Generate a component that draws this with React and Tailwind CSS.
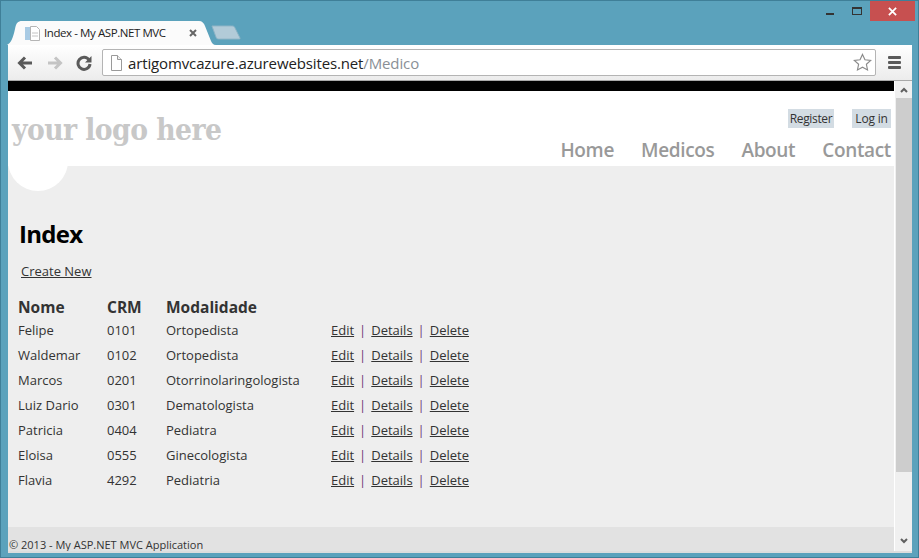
import React from "react";

const seg = { fontFamily: '"Open Sans", "Noto Sans", sans-serif' };
const rows = [
  ["Felipe", "0101", "Ortopedista"],
  ["Waldemar", "0102", "Ortopedista"],
  ["Marcos", "0201", "Otorrinolaringologista"],
  ["Luiz Dario", "0301", "Dematologista"],
  ["Patricia", "0404", "Pediatra"],
  ["Eloisa", "0555", "Ginecologista"],
  ["Flavia", "4292", "Pediatria"],
];

function DocIcon({ className }) {
  return (
    <svg viewBox="0 0 12 16" className={className}>
      <path d="M1.500 .5h6l4 4v11h-10z" fill="#fff" stroke="#9a9a9a" />
      <path d="M7.500 .5v4h4" fill="#eee" stroke="#9a9a9a" />
    </svg>
  );
}

export default function App() {
  return (
    <div className="relative w-[919px] h-[558px] overflow-hidden bg-[#5ba2bc] border border-[#3f7f98] flex flex-col" style={seg}>
      {/* title bar */}
      <div className="h-[44px] shrink-0 flex items-start justify-between pl-[6px]">
        <div className="flex items-end h-full pt-[20px]">
          <div className="relative w-[206px] h-[24px]">
            <svg viewBox="0 0 210 24" className="absolute left-0 top-0 w-[210px] h-[24px]">
              <path d="M0 24C4 22 6 17 8 8C9 2 11 0 15 0H192C195 0 197 2 198 5L204 20C205 22 206 24 209 24Z" fill="#fbfbfb" />
            </svg>
            <div className="relative flex items-center h-full pl-[18px]">
              <svg viewBox="0 0 15 15" className="w-[15px] h-[15px] shrink-0">
                <rect x="0" y="1" width="5" height="13" fill="#a9cbe4" />
                <path d="M5.500 .5h6l3 3v11h-9z" fill="#fff" stroke="#b5b5b5" />
                <path d="M7 7h6M7 10h6" stroke="#c4c4c4" />
              </svg>
              <span className="ml-[4px] w-[122px] whitespace-nowrap text-[11.5px] leading-[14px] tracking-[-0.42px] text-[#222]">Index - My ASP.NET MVC</span>
              <svg viewBox="0 0 8 8" className="w-[8px] h-[8px] ml-[23px] shrink-0"><path d="M1 1l6 6M7 1L1 7" stroke="#666" strokeWidth="2" /></svg>
            </div>
          </div>
          <svg viewBox="0 0 32 16" preserveAspectRatio="none" className="w-[30px] h-[15px] ml-[-2px] mb-[5px] shrink-0">
            <path d="M1 1H22C25 1 25 2 26 4L31 14C31 15 31 15 30 15H9C7 15 6 15 5 12Z" fill="#b2cbd8" stroke="#8db3c5" />
          </svg>
        </div>
        <div className="flex items-start pr-[3px]">
          <div className="w-[8px] h-[2px] bg-[#333] mt-[12px] mr-[18px]" />
          <div className="w-[10px] h-[8px] border border-t-2 border-[#333] mt-[6px] mr-[8px]" />
          <div className="w-[45px] h-[20px] bg-[#c75050] flex items-center justify-center">
            <svg viewBox="0 0 10 10" className="w-[9px] h-[9px]"><path d="M1 1l8 8M9 1l-8 8" stroke="#fff" strokeWidth="2" /></svg>
          </div>
        </div>
      </div>

      {/* browser frame */}
      <div className="ml-[7px] w-[904px] flex-1 flex flex-col min-h-0 bg-white rounded-t-[2px] border-b-[2px] border-[#ddd]">
        <div className="h-[36px] shrink-0 flex items-center bg-gradient-to-b from-white to-[#ececec] border-b border-[#a9a9a9] pl-[9px]">
          <svg viewBox="0 0 16 14" className="w-[16px] h-[14px] shrink-0"><path d="M15 7H3M8 1.500 2.500 7 8 12.500" fill="none" stroke="#5a5a5a" strokeWidth="3" /></svg>
          <svg viewBox="0 0 16 14" className="w-[16px] h-[14px] ml-[14px] shrink-0"><path d="M1 7h12M8 1.500 13.500 7 8 12.500" fill="none" stroke="#c4c4c4" strokeWidth="3" /></svg>
          <svg viewBox="0 0 16 16" className="w-[16px] h-[16px] ml-[13px] shrink-0"><path d="M13 5A6 6 0 1 0 14 9" fill="none" stroke="#5a5a5a" strokeWidth="3" /><path d="M15.500 1v6.500H9z" fill="#5a5a5a" /></svg>
          <div className="ml-[10px] flex items-center w-[774px] h-[27px] shrink-0 bg-white border border-[#b4b4b4] rounded-[2px]">
            <DocIcon className="w-[12px] h-[16px] ml-[7px] shrink-0" />
            <span className="ml-[6px] text-[15px] leading-[20px] tracking-[-0.13px] whitespace-nowrap text-[#222]">artigomvcazure.azurewebsites.net<span className="text-[#8a8f96]">/Medico</span></span>
            <svg viewBox="0 0 20 20" className="w-[19px] h-[19px] ml-auto mr-[3px]"><path d="M10 1.500l2.600 5.600 6 .7-4.500 4.100 1.200 6L10 15l-5.300 2.900 1.200-6L1.400 7.800l6-.7z" fill="#fff" stroke="#8a8a8a" strokeWidth="1.200" /></svg>
          </div>
          <div className="ml-[12px] w-[13px] flex flex-col gap-[2px]">
            <div className="h-[3px] bg-[#5a5a5a] rounded-[1px]" />
            <div className="h-[3px] bg-[#5a5a5a] rounded-[1px]" />
            <div className="h-[3px] bg-[#5a5a5a] rounded-[1px]" />
          </div>
        </div>

        <div className="flex-1 flex min-h-0">
          {/* page */}
          <div className="w-[886px] shrink-0 flex flex-col overflow-hidden">
            <div className="h-[10px] shrink-0 bg-black" />
            <header className="h-[75px] shrink-0 bg-white flex justify-between">
              <div className="pl-[4px] pt-[21px] text-[29px] leading-[36px] font-bold text-[#c8c8c8] tracking-[-0.6px] whitespace-nowrap" style={{ fontFamily: '"DejaVu Serif", serif' }}>
                <span className="inline-block origin-left scale-x-[0.92]">your logo here</span>
              </div>
              <div className="pr-[3px] flex flex-col items-end">
                <div className="flex gap-[18px] mt-[18px]">
                  <a className="bg-[#d3dce3] w-[46px] h-[19px] text-center text-[12px] leading-[19px] tracking-[-0.35px] text-[#333]">Register</a>
                  <a className="bg-[#d3dce3] w-[39px] h-[19px] text-center text-[12px] leading-[19px] tracking-[-0.2px] text-[#333]">Log in</a>
                </div>
                <nav className="flex gap-[27px] mt-[9px] text-[19px] leading-[26px] font-semibold text-[#999] tracking-[-0.35px]">
                  <a>Home</a><a>Medicos</a><a>About</a><a>Contact</a>
                </nav>
              </div>
            </header>
            <main className="flex-1 min-h-0 bg-[#eeeeee] relative pl-[10px]">
              <div className="absolute left-0 top-0 w-[60px] h-[25px] overflow-hidden">
                <div className="w-[60px] h-[60px] mt-[-35px] bg-white rounded-full" />
              </div>
              <h1 className="ml-[1px] pt-[52px] text-[24px] leading-[32px] font-bold text-black tracking-[-0.7px]">Index</h1>
              <a className="block ml-[3px] mt-[11px] w-fit text-[13px] leading-[20px] underline text-[#333]">Create New</a>
              <table className="mt-[13px] border-collapse text-[13px] text-[#333]">
                <thead>
                  <tr className="h-[24px] text-left text-[15.5px] leading-[20px] font-bold">
                    <th className="w-[89px] p-0 pt-[2px] font-bold">Nome</th>
                    <th className="w-[59px] p-0 pt-[2px] font-bold">CRM</th>
                    <th className="w-[165px] p-0 pt-[2px] font-bold">Modalidade</th>
                    <th className="p-0" />
                  </tr>
                </thead>
                <tbody>
                  {rows.map((r) => (
                    <tr key={r[1]} className="h-[25px]">
                      <td className="p-0">{r[0]}</td>
                      <td className="p-0">{r[1]}</td>
                      <td className="p-0 whitespace-nowrap">{r[2]}</td>
                      <td className="p-0 whitespace-nowrap">
                        <a className="underline">Edit</a>
                        <span className="mx-[5px] text-[#6e3a78]">|</span>
                        <a className="underline">Details</a>
                        <span className="mx-[5px] text-[#6e3a78]">|</span>
                        <a className="underline">Delete</a>
                      </td>
                    </tr>
                  ))}
                </tbody>
              </table>
            </main>
            <footer className="h-[24px] shrink-0 bg-[#e2e2e2] pl-[1px] pt-[11px] text-[11px] leading-[14px] text-[#333] whitespace-nowrap overflow-hidden">© 2013 - My ASP.NET MVC Application</footer>
          </div>
          {/* scrollbar */}
          <div className="w-[18px] shrink-0 bg-[#f0f0f0] border-l border-white flex flex-col items-center">
            <div className="h-[17px] flex items-center justify-center">
              <svg viewBox="0 0 8 6" className="w-[8px] h-[6px]"><path d="M1 5l3-3 3 3" fill="none" stroke="#606060" strokeWidth="2" /></svg>
            </div>
            <div className="w-[16px] flex-1 flex flex-col">
              <div className="h-[374px] bg-[#cdcdcd]" />
            </div>
            <div className="h-[20px] flex items-center justify-center">
              <svg viewBox="0 0 8 6" className="w-[8px] h-[6px]"><path d="M1 1l3 3 3-3" fill="none" stroke="#606060" strokeWidth="2" /></svg>
            </div>
          </div>
        </div>
      </div>
      <div className="h-[4px] shrink-0" />
    </div>
  );
}
